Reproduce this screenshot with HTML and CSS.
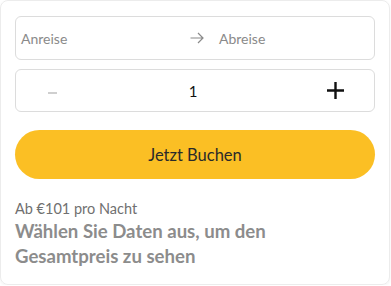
FILE: index.html
```html
<!DOCTYPE html>
<html lang="de">
<head>
<meta charset="utf-8">
<link rel="stylesheet" href="styles.css">
</head>
<body>
<div class="card">
  <div class="dates">
    <span class="date date-left">Anreise</span>
    <svg class="arrow" width="14" height="12" viewBox="0 0 14 12"><path d="M0.5 6H13M8 1L13 6L8 11" fill="none" stroke="#8a8a8a" stroke-width="1.2"/></svg>
    <span class="date date-right">Abreise</span>
  </div>
  <div class="guests">
    <span class="minus"></span>
    <span class="count">1</span>
    <svg class="plus" width="17" height="17" viewBox="0 0 17 17"><path d="M8.5 0V17M0 8.5H17" stroke="#111" stroke-width="2.4"/></svg>
  </div>
  <button class="book">Jetzt Buchen</button>
  <div class="from">Ab €101 pro Nacht</div>
  <div class="total">Wählen Sie Daten aus, um den Gesamtpreis zu sehen</div>
</div>
</body>
</html>
```
FILE: styles.css
```css
html, body { margin: 0; padding: 0; background: #fff; }
body { font-family: Lato, "Open Sans", sans-serif; }
.card {
  box-sizing: border-box;
  width: 390px;
  height: 285px;
  border: 1px solid #ececec;
  border-radius: 8px;
  padding: 15px 14px 0 14px;
  box-shadow: 0 1px 3px rgba(0,0,0,0.05);
}
.dates {
  height: 44px;
  box-sizing: border-box;
  border: 1px solid #dcdcdc;
  border-radius: 6px;
  display: flex;
  align-items: center;
  padding: 0 5px;
}
.date { flex: 1; font-size: 14px; color: #8a8a8a; }
.date-left { padding-right: 15px; }
.date-right { padding-left: 15px; }
.arrow { flex: none; margin-left: 4px; }
.guests {
  margin-top: 9px;
  height: 43px;
  box-sizing: border-box;
  border: 1px solid #dcdcdc;
  border-radius: 6px;
  display: flex;
  align-items: center;
  justify-content: space-between;
  padding: 0 30px 0 32px;
}
.minus { width: 9px; height: 2px; background: #cfcfcf; margin-top: 4px; }
.count { font-size: 15px; color: #111; margin-left: 2px; }
.plus { display: block; }
.book {
  display: block;
  width: 100%;
  margin-top: 18px;
  height: 49px;
  border: none;
  border-radius: 25px;
  background: #fbbf24;
  color: #2a2a2a;
  font-family: inherit;
  font-size: 16.5px;
}
.from { margin-top: 21px; font-size: 14.5px; color: #707070; line-height: 18px; }
.total { max-width: 300px; font-size: 18.6px; font-weight: 700; color: #8c8c8c; line-height: 25px; margin-top: 1px; }
```
